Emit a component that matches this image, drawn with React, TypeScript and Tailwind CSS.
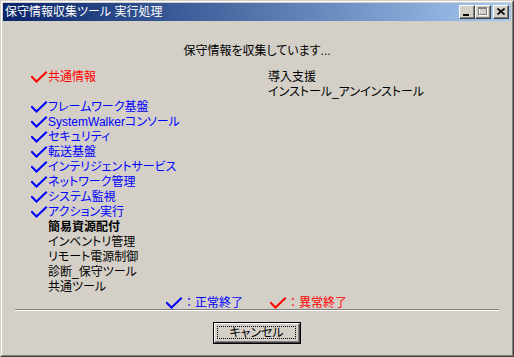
import React from "react";

const FONT = '"Liberation Sans", "Noto Sans CJK JP", sans-serif';

type Item = { label: string; state: "ok" | "ng" | "run" | "wait" | "blank" };

const items: Item[] = [
  { label: "共通情報", state: "ng" },
  { label: "", state: "blank" },
  { label: "フレームワーク基盤", state: "ok" },
  { label: "SystemWalkerコンソール", state: "ok" },
  { label: "セキュリティ", state: "ok" },
  { label: "転送基盤", state: "ok" },
  { label: "インテリジェントサービス", state: "ok" },
  { label: "ネットワーク管理", state: "ok" },
  { label: "システム監視", state: "ok" },
  { label: "アクション実行", state: "ok" },
  { label: "簡易資源配付", state: "run" },
  { label: "インベントリ管理", state: "wait" },
  { label: "リモート電源制御", state: "wait" },
  { label: "診断_保守ツール", state: "wait" },
  { label: "共通ツール", state: "wait" },
];

function Check({ color }: { color: string }) {
  return (
    <svg width="17" height="15" viewBox="0 0 17 15" className="shrink-0">
      <polyline points="1,7 5.5,11.5 15,2.5" fill="none" stroke={color} strokeWidth="2" strokeLinecap="square" />
    </svg>
  );
}

function TitleButton({ children }: { children: React.ReactNode }) {
  return (
    <div className="w-[16px] h-[14px] border border-t-white border-l-white border-r-[#404040] border-b-[#404040] bg-[#D4D0C8]">
      <div className="w-full h-full border-r border-b border-[#808080] flex items-center justify-center">
        {children}
      </div>
    </div>
  );
}

export default function App() {
  return (
    <div
      className="w-[514px] h-[357px] border border-t-[#D4D0C8] border-l-[#D4D0C8] border-r-[#404040] border-b-[#404040] bg-[#D4D0C8] [font-feature-settings:'palt']"
      style={{ fontFamily: FONT }}
    >
      <div className="w-full h-full border border-t-white border-l-white border-r-[#808080] border-b-[#808080] p-px flex flex-col">
        {/* Title bar */}
        <div className="h-[18px] flex items-center justify-between bg-gradient-to-r from-[#0A246A] to-[#A6CAF0] pl-[2px] pr-[2px]">
          <span className="text-white text-[12px] leading-[15px] whitespace-nowrap">保守情報収集ツール 実行処理</span>
          <div className="flex items-center">
            <TitleButton>
              <div className="w-[6px] h-[2px] bg-black mt-[6px] -ml-[1px]" />
            </TitleButton>
            <TitleButton>
              <svg width="10" height="9" viewBox="0 0 10 9">
                <rect x="1.5" y="1.5" width="8" height="7" fill="none" stroke="white" strokeWidth="1" />
                <rect x="0.5" y="0.5" width="8" height="7" fill="none" stroke="#808080" strokeWidth="1" />
                <line x1="0.5" y1="1.5" x2="8.5" y2="1.5" stroke="#808080" strokeWidth="1" />
              </svg>
            </TitleButton>
            <div className="ml-[2px]">
              <TitleButton>
                <svg width="8" height="7" viewBox="0 0 8 7">
                  <path d="M0.5,0.5 L7.5,6.5 M7.5,0.5 L0.5,6.5" stroke="black" strokeWidth="1.6" />
                </svg>
              </TitleButton>
            </div>
          </div>
        </div>

        {/* Body */}
        <div className="flex-1 flex flex-col text-[12px] leading-[15px]">
          <div className="mt-[23px] text-center text-black">保守情報を収集しています...</div>

          <div className="mt-[11px] flex">
            <div className="ml-[28px] w-[237px] flex flex-col">
              {items.map((it, i) => (
                <div key={i} className="h-[15px] flex items-center">
                  <div className="w-[17px] h-[15px] flex items-center">
                    {it.state === "ok" && <Check color="#0000FF" />}
                    {it.state === "ng" && <Check color="#FF0000" />}
                  </div>
                  <span
                    className={`whitespace-nowrap ${
                      it.state === "ok"
                        ? "text-[#0000FF]"
                        : it.state === "ng"
                        ? "text-[#FF0000]"
                        : it.state === "run"
                        ? "text-black font-bold"
                        : "text-black"
                    }`}
                  >
                    {it.label}
                  </span>
                </div>
              ))}
            </div>
            <div className="flex flex-col text-black">
              <div className="h-[15px]">導入支援</div>
              <div className="h-[15px] whitespace-nowrap">インストール_アンインストール</div>
            </div>
          </div>

          {/* Legend */}
          <div className="mt-[1px] h-[12px] flex items-start overflow-visible [font-feature-settings:normal]">
            <div className="ml-[163px] flex items-center text-[#0000FF]">
              <Check color="#0000FF" />
              <span>：正常終了</span>
            </div>
            <div className="ml-[27px] flex items-center text-[#FF0000]">
              <Check color="#FF0000" />
              <span>：異常終了</span>
            </div>
          </div>

          {/* Separator */}
          <div className="mt-[1px] ml-[12px] w-[484px] border-t border-t-[#808080] border-b border-b-white" />

          <div className="mt-[11px] flex justify-center">
            <button className="w-[88px] h-[22px] border border-black bg-[#D4D0C8] p-0">
              <div className="w-full h-full border border-t-white border-l-white border-r-[#404040] border-b-[#404040]">
                <div className="w-full h-full border-r border-b border-[#808080] p-[2px]">
                  <div className="w-full h-full border border-dotted border-black flex items-center justify-center text-black text-[12px] leading-none">
                    キャンセル
                  </div>
                </div>
              </div>
            </button>
          </div>
        </div>
      </div>
    </div>
  );
}
